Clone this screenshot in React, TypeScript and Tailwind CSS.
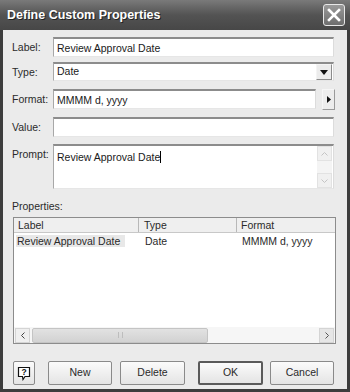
import React from "react";

const ui = { fontFamily: '"Liberation Sans", Arial, sans-serif' };

function Field({ label, children, className = "" }: { label: string; children: React.ReactNode; className?: string }) {
  return (
    <div className={`flex items-start ${className}`}>
      <span className="w-[41px] shrink-0 pt-[4px] text-[10.5px] leading-[12px] text-[#2a2a2a]">{label}</span>
      {children}
    </div>
  );
}

const sunken = "border-t-2 border-l border-t-[#8c8c8c] border-l-[#a8a8a8] border-r border-b border-r-[#dcdcdc] border-b-[#e6e6e6] bg-white";

function Btn({ children, w, def = false }: { children: React.ReactNode; w: string; def?: boolean }) {
  return (
    <div
      className={`flex h-[24px] items-center justify-center rounded-[2px] bg-gradient-to-b from-[#fbfbfb] to-[#e4e4e4] text-[10.5px] text-[#2a2a2a] ${w} ${
        def ? "border-2 border-[#5a5a5a]" : "border border-[#8a8a8a]"
      }`}
    >
      {children}
    </div>
  );
}

export default function App() {
  return (
    <div className="h-[392px] w-[350px] overflow-hidden bg-[#3d3d3d]" style={ui}>
      {/* title bar */}
      <div className="flex h-[30px] items-center justify-between bg-gradient-to-b from-[#7a7a7a] via-[#535353] to-[#474747] pl-[7px] pr-[5px]">
        <span className="text-[12.5px] font-bold text-white [text-shadow:1px_1px_0_#222]">Define Custom Properties</span>
        <div className="flex h-[22px] w-[22px] items-center justify-center rounded-[3px] border border-[#e8e8e8] bg-gradient-to-b from-[#9a9a9a] to-[#6e6e6e]">
          <svg width="14" height="14" viewBox="0 0 14 14">
            <path d="M2 2 L12 12 M12 2 L2 12" stroke="white" strokeWidth="2.6" strokeLinecap="square" />
          </svg>
        </div>
      </div>

      {/* client */}
      <div className="mx-[3px] flex h-[359px] flex-col bg-[#ebebeb] pl-[9px] pr-[13px] pt-[7px]">
        <Field label="Label:">
          <div className={`h-[20px] flex-1 px-[3px] pt-[3px] text-[10.5px] leading-[12px] text-[#1a1a1a] ${sunken}`}>Review Approval Date</div>
        </Field>

        <Field label="Type:" className="mt-[5px]">
          <div className={`flex h-[19px] flex-1 items-center justify-between pl-[3px] pr-[1px] text-[10.5px] text-[#1a1a1a] ${sunken}`}>
            <span>Date</span>
            <div className="flex h-[16px] w-[16px] items-center justify-center border border-[#8c8c8c] border-l-[#f4f4f4] border-t-[#f4f4f4] bg-[#ececec]">
              <svg width="8" height="5" viewBox="0 0 8 5">
                <path d="M0 0 H8 L4 5 Z" fill="#111" />
              </svg>
            </div>
          </div>
        </Field>

        <Field label="Format:" className="mt-[8px]">
          <div className={`h-[20px] flex-1 px-[3px] pt-[3px] text-[10.5px] leading-[12px] text-[#1a1a1a] ${sunken}`}>MMMM d, yyyy</div>
          <div className="ml-[6px] -mr-[1px] flex h-[21px] w-[13px] items-center justify-center border border-[#9a9a9a] border-l-[#f6f6f6] border-t-[#f6f6f6] bg-[#ededed]">
            <svg width="4" height="7" viewBox="0 0 4 7">
              <path d="M0 0 L4 3.5 L0 7 Z" fill="#111" />
            </svg>
          </div>
        </Field>

        <Field label="Value:" className="mt-[7px]">
          <div className={`h-[20px] flex-1 ${sunken}`} />
        </Field>

        <Field label="Prompt:" className="mt-[7px]">
          <div className={`flex h-[45px] flex-1 ${sunken}`}>
            <div className="flex-1 px-[3px] pt-[3px] text-[10.5px] leading-[12px] text-[#1a1a1a]">
              Review Approval Date<span className="inline-block h-[12px] w-px translate-y-[2px] bg-black" />
            </div>
            <div className="mr-px flex w-[15px] flex-col justify-between bg-[#f4f4f4]">
              <div className="flex h-[15px] items-center justify-center border border-[#e2e2e2] bg-[#f0f0f0]">
                <svg width="7" height="4" viewBox="0 0 7 4">
                  <path d="M0.5 3.5 L3.5 0.5 L6.5 3.5" fill="none" stroke="#c4c4c4" />
                </svg>
              </div>
              <div className="flex h-[15px] items-center justify-center border border-[#e2e2e2] bg-[#f0f0f0]">
                <svg width="7" height="4" viewBox="0 0 7 4">
                  <path d="M0.5 0.5 L3.5 3.5 L6.5 0.5" fill="none" stroke="#c4c4c4" />
                </svg>
              </div>
            </div>
          </div>
        </Field>

        <div className="mt-[11px] text-[10.5px] leading-[12px] text-[#2a2a2a]">Properties:</div>

        {/* list view */}
        <div className="ml-px mr-[-2px] mt-[5px] flex h-[127px] flex-col border border-[#8c8c8c] bg-white">
          <div className="flex h-[15px] border-b border-[#c8c8c8] bg-[#efefef] text-[10.5px] leading-[14px] text-[#2a2a2a]">
            <div className="w-[125px] border-r border-[#b8b8b8] pl-[4px]">Label</div>
            <div className="w-[98px] border-r border-[#b8b8b8] pl-[5px]">Type</div>
            <div className="flex-1 pl-[4px]">Format</div>
          </div>
          <div className="mt-[2px] flex h-[12px] text-[10.5px] leading-[12px] text-[#2a2a2a]">
            <div className="w-[125px] pl-[2px]">
              <span className="inline-block bg-[#e8e8e8] pl-px pr-[5px]">Review Approval Date</span>
            </div>
            <div className="w-[98px] pl-[6px]">Date</div>
            <div className="flex-1 pl-[5px]">MMMM d, yyyy</div>
          </div>
          <div className="flex-1" />
          {/* horizontal scrollbar */}
          <div className="flex h-[16px] items-center bg-[#f6f6f6] px-px">
            <div className="flex h-[15px] w-[15px] items-center justify-center border border-[#d4d4d4] bg-[#efefef]">
              <svg width="4" height="7" viewBox="0 0 4 7">
                <path d="M3.5 0.5 L0.5 3.5 L3.5 6.5" fill="none" stroke="#444" />
              </svg>
            </div>
            <div className="ml-[2px] flex h-[15px] w-[176px] items-center justify-center rounded-[2px] border border-[#c4c4c4] bg-gradient-to-b from-[#e2e2e2] to-[#d2d2d2]">
              <div className="h-[6px] w-[5px] border-x border-[#bdbdbd]" />
            </div>
            <div className="flex-1" />
            <div className="flex h-[15px] w-[15px] items-center justify-center border border-[#d4d4d4] bg-[#e6e6e6]">
              <svg width="4" height="7" viewBox="0 0 4 7">
                <path d="M0.5 0.5 L3.5 3.5 L0.5 6.5" fill="none" stroke="#555" />
              </svg>
            </div>
          </div>
        </div>

        {/* buttons */}
        <div className="mt-[17px] flex items-center pl-[1px]">
          <Btn w="w-[22px]">
            <svg width="14" height="15" viewBox="0 0 14 15">
              <path d="M1.5 1.5 H12.5 V10.5 H8 L6 13.5 L5.5 10.5 H1.5 Z" fill="white" stroke="#111" strokeWidth="1.2" />
              <text x="7" y="9" textAnchor="middle" fontSize="8.5" fontWeight="bold" fontFamily="Liberation Sans, Arial, sans-serif" fill="#111">?</text>
            </svg>
          </Btn>
          <div className="ml-[13px]"><Btn w="w-[64px]">New</Btn></div>
          <div className="ml-[8px]"><Btn w="w-[65px]">Delete</Btn></div>
          <div className="ml-[13px]"><Btn w="w-[65px]" def>OK</Btn></div>
          <div className="ml-[7px]"><Btn w="w-[64px]">Cancel</Btn></div>
        </div>
      </div>
    </div>
  );
}
